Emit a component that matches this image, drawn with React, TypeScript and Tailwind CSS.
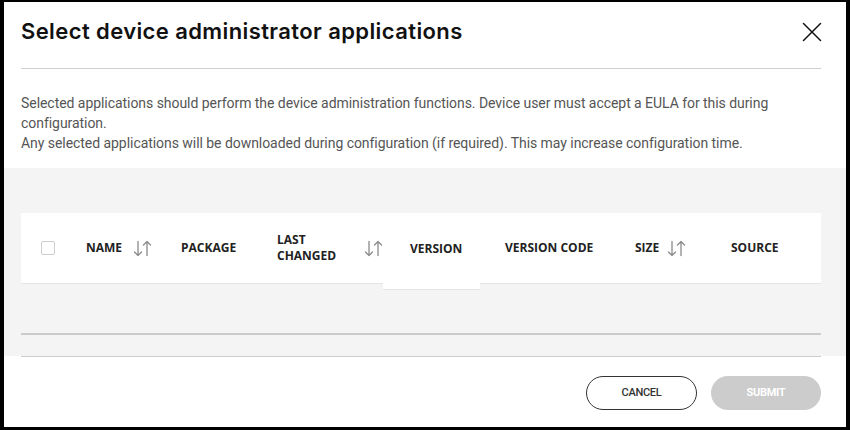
const SortIcon = () => (
  <svg width="19" height="19" viewBox="0 0 19 19" fill="none" stroke="#8a8a8a" strokeWidth="1.3" strokeLinecap="round" strokeLinejoin="round">
    <path d="M5 2.5v14M1.5 13l3.5 3.5L8.5 13" />
    <path d="M14 16.5v-14M10.5 6L14 2.5 17.5 6" />
  </svg>
);

const CloseIcon = () => (
  <svg width="20" height="20" viewBox="0 0 20 20" fill="none" stroke="#111" strokeWidth="1.5" strokeLinecap="round">
    <path d="M1.5 1.5l17 17M18.5 1.5l-17 17" />
  </svg>
);

const App = () => {
  return (
    <div className="h-[430px] w-[850px] bg-black pt-[2px] pl-[4px] pr-[4px] pb-[3px]">
      <div className="flex h-full flex-col bg-white font-['Roboto',sans-serif]">
        <div className="pl-[17px] pr-[25px]">
          <div className="box-border flex h-[67px] items-start justify-between border-b border-[#cfcfcf] pt-[16px]">
            <h1 className="font-['Inter',sans-serif] text-[22px] leading-[26px] font-semibold tracking-[0.4px] text-[#111]">
              Select device administrator applications
            </h1>
            <div className="mr-[-1px] flex h-[28px] items-center">
              <CloseIcon />
            </div>
          </div>
          <p className="pt-[24px] pb-[15px] text-[14px] leading-[20px] tracking-[-0.05px] text-[#555]">
            Selected applications should perform the device administration functions. Device user must accept a EULA for this during
            <br />
            configuration.
            <br />
            Any selected applications will be downloaded during configuration (if required). This may increase configuration time.
          </p>
        </div>

        <div className="h-[188px] bg-[#f4f4f4] pt-[45px] pl-[17px] pr-[25px]">
          <div className="box-border flex h-[71px] items-start border-b border-[#e4e4e4] bg-white font-['Open_Sans',sans-serif] text-[12px] leading-[16px] font-bold text-[#222]">
            <div className="flex h-[70px] w-[49px] items-center pl-[20px]">
              <span className="block h-[14px] w-[14px] rounded-[2px] border border-[#cdcdcd] bg-white" />
            </div>
            <div className="flex h-[70px] w-[95px] items-center pl-[16px]">
              <span>NAME</span>
              <span className="ml-[11px]">
                <SortIcon />
              </span>
            </div>
            <div className="flex h-[70px] w-[96px] items-center pl-[16px]">PACKAGE</div>
            <div className="flex h-[70px] w-[122px] items-center pl-[16px]">
              <span className="w-[80px]">
                LAST
                <br />
                CHANGED
              </span>
              <span className="ml-[15px]">
                <SortIcon />
              </span>
            </div>
            <div className="relative z-10 box-border flex h-[77px] w-[97px] items-start border-b border-[#e4e4e4] bg-white pt-[28px] pl-[27px]">
              VERSION
            </div>
            <div className="flex h-[70px] w-[139px] items-center pl-[25px]">VERSION CODE</div>
            <div className="flex h-[70px] w-[96px] items-center pl-[16px]">
              <span>SIZE</span>
              <span className="ml-[8px]">
                <SortIcon />
              </span>
            </div>
            <div className="flex h-[70px] flex-1 items-center pl-[16px]">SOURCE</div>
          </div>
          <div className="mt-[49px] h-[2px] bg-[#cbcbcb]" />
        </div>

        <div className="pl-[17px] pr-[25px]">
          <div className="h-[1px] bg-[#cbcbcb]" />
          <div className="flex justify-end gap-[14px] pt-[19px]">
            <button type="button" className="h-[34px] w-[111px] rounded-full border border-[#333] bg-white pt-[1px] text-[11px] font-medium tracking-[-0.3px] text-[#333]">
              CANCEL
            </button>
            <button type="button" className="h-[34px] w-[110px] rounded-full bg-[#cccccc] pt-[1px] text-[11px] font-bold tracking-[-0.3px] text-white">
              SUBMIT
            </button>
          </div>
        </div>
      </div>
    </div>
  );
};

export default App;
